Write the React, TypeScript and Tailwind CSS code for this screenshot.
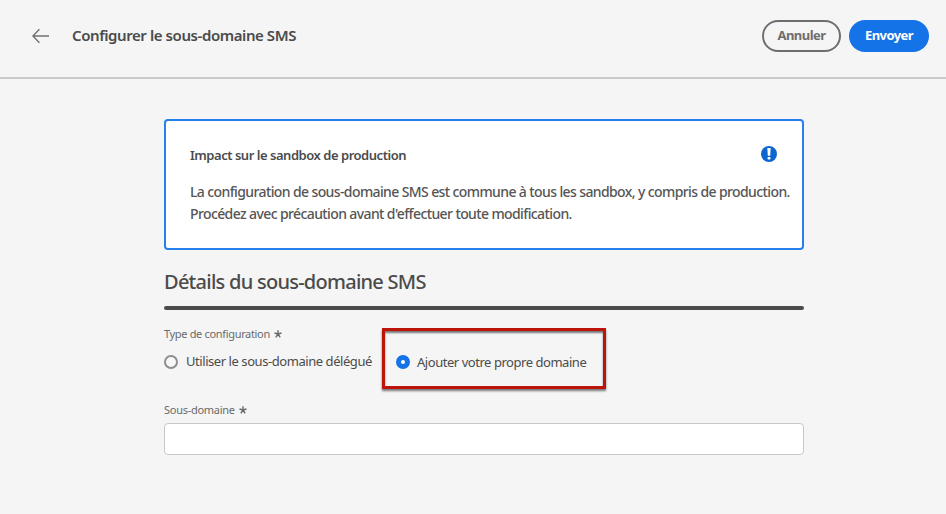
import type { ReactNode } from "react";

function BackArrow() {
  return (
    <svg width="18" height="16" viewBox="0 0 18 16" fill="none" stroke="#707070" strokeWidth="1.4">
      <path d="M17 8H1M7.4 1.2L0.9 8L7.4 14.8" />
    </svg>
  );
}

function AlertIcon() {
  return (
    <svg className="mt-px" width="16" height="16" viewBox="0 0 16 16">
      <circle cx="8" cy="8" r="8" fill="#0d66d0" />
      <path d="M6.3 2h3.4l-.5 7.8H6.8z" fill="#fff" />
      <rect x="6.5" y="11" width="3" height="2.5" rx="0.9" fill="#fff" />
    </svg>
  );
}

function Asterisk() {
  return (
    <svg width="8" height="8" viewBox="0 0 8 8" stroke="#6a6a6a" strokeWidth="1.4" fill="none">
      <path d="M4 4V0.3M4 4L0.5 3M4 4L7.5 3M4 4L1.8 7.3M4 4L6.2 7.3" />
    </svg>
  );
}

function FieldLabel({ children }: { children: ReactNode }) {
  return (
    <div className="flex h-4 items-center whitespace-nowrap text-[11px] leading-4 text-[#6a6a6a]">
      {children}
      <span className="ml-1">
        <Asterisk />
      </span>
    </div>
  );
}

export default function App() {
  return (
    <div className="h-[514px] w-[946px] overflow-hidden bg-[#f5f5f5] font-['Noto_Sans',sans-serif] text-[#4b4b4b]">
      <header className="flex h-[79px] items-start border-b-2 border-[#cacaca] pt-5 pr-[17px] pl-8">
        <div className="flex h-8 w-10 items-center">
          <BackArrow />
        </div>
        <h1 className="grow text-[15px] leading-[31px] font-semibold tracking-[-0.42px] whitespace-nowrap">
          Configurer le sous-domaine SMS
        </h1>
        <button className="flex h-8 w-[79px] items-start justify-center rounded-full border-2 border-[#6e6e6e] text-[13px] leading-[26px] font-bold tracking-[-0.55px] text-[#6e6e6e]">
          Annuler
        </button>
        <button className="ml-2 flex h-8 w-20 items-start justify-center rounded-full bg-[#1473e6] text-[13px] leading-[30px] font-bold tracking-[-0.55px] text-white">
          Envoyer
        </button>
      </header>

      <main className="ml-[164px] w-[640px] pt-10">
        <section className="h-[131px] rounded border-2 border-[#2680eb] bg-white pt-6 pl-6">
          <div className="flex h-5 items-start justify-between pr-[25px]">
            <h2 className="text-[13px] leading-5 font-semibold tracking-[-0.47px] whitespace-nowrap">
              Impact sur le sandbox de production
            </h2>
            <AlertIcon />
          </div>
          <div className="mt-4 text-[14px] leading-[22px] font-medium whitespace-nowrap text-[#555]">
            <p className="tracking-[-0.61px]">
              La configuration de sous-domaine SMS est commune à tous les sandbox, y compris de production.
            </p>
            <p className="tracking-[-0.61px]">Procédez avec précaution avant d'effectuer toute modification.</p>
          </div>
        </section>

        <h2 className="mt-[18px] h-7 text-[20px] leading-7 font-medium tracking-[-0.74px] whitespace-nowrap">
          Détails du sous-domaine SMS
        </h2>
        <div className="mt-[10px] h-1 rounded-sm bg-[#4b4b4b]" />

        <div className="mt-4">
          <FieldLabel>
            <span className="tracking-[-0.33px]">Type de configuration</span>
          </FieldLabel>
        </div>

        <div className="-mt-[14px] flex items-start">
          <label className="mt-[23px] flex h-5 w-[218px] items-center">
            <span className="mt-px h-[14px] w-[14px] shrink-0 rounded-full border-2 border-[#8e8e8e] bg-[#f8f8f8]" />
            <span className="ml-2 text-[13px] leading-5 tracking-[-0.44px] whitespace-nowrap">
              Utiliser le sous-domaine délégué
            </span>
          </label>
          <label className="flex h-[61px] w-[224px] items-center border-[3px] border-[#bd1409] pt-[7px] pl-[11px] shadow-[0_2px_2px_#777,inset_0_2px_2px_#777]">
            <span className="h-[14px] w-[14px] shrink-0 rounded-full border-[5px] border-[#1473e6] bg-white" />
            <span className="ml-[7px] text-[13px] leading-5 tracking-[-0.46px] whitespace-nowrap">
              Ajouter votre propre domaine
            </span>
          </label>
        </div>

        <div className="mt-[13px]">
          <FieldLabel>
            <span className="tracking-[-0.28px]">Sous-domaine</span>
          </FieldLabel>
        </div>
        <input className="mt-[5px] block h-8 w-full rounded border border-[#c8c8c8] bg-white px-3 text-[13px] outline-none" />
      </main>
    </div>
  );
}
